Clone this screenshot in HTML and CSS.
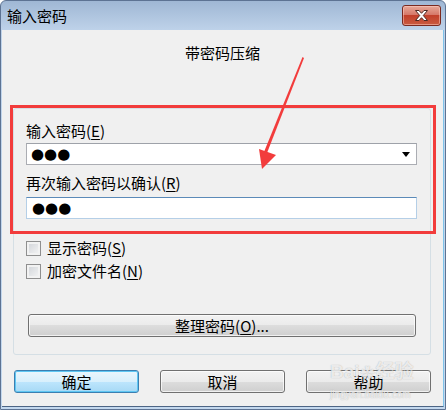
FILE: index.html
```html
<!DOCTYPE html>
<html lang="zh-CN">
<head>
    <meta charset="UTF-8">
    <title>输入密码</title>
    <link rel="stylesheet" href="styles.css">
</head>
<body>
    <div class="window">
        <div class="titlebar">
            <span class="title">输入密码</span>
            <div class="close-btn">
                <svg width="15" height="13" viewBox="0 0 15 13">
                    <path d="M1.5 1.5 H5 L7.5 4.3 L10 1.5 H13.5 L9.3 6.5 L13.5 11.5 H10 L7.5 8.7 L5 11.5 H1.5 L5.7 6.5 Z"
                          fill="#fff" stroke="#4d2a24" stroke-width="1" stroke-linejoin="round"/>
                </svg>
            </div>
        </div>
        <div class="client">
            <div class="heading">带密码压缩</div>
            <div class="group">
                <div class="label">输入密码(<u>E</u>)</div>
                <div class="combo">
                    <span class="dots">●●●</span>
                    <span class="arrow"></span>
                </div>
                <div class="label label-gap">再次输入密码以确认(<u>R</u>)</div>
                <div class="field">
                    <span class="dots">●●●</span>
                </div>
                <div class="check first">
                    <span class="box"></span>
                    <span>显示密码(<u>S</u>)</span>
                </div>
                <div class="check">
                    <span class="box"></span>
                    <span>加密文件名(<u>N</u>)</span>
                </div>
                <div class="btn wide">整理密码(<u>O</u>)...</div>
            </div>
            <div class="buttons">
                <div class="btn default">确定</div>
                <div class="btn">取消</div>
                <div class="btn">帮助</div>
            </div>
        </div>

        <!-- annotation overlay -->
        <div class="mark"></div>
        <svg class="pointer" width="446" height="410" viewBox="0 0 446 410">
            <path d="M302.5 57 L304 58 L267 153 L264 152 Z" fill="#f23c3c"/>
            <path d="M259 149 L276 155 L262 169 Z" fill="#f23c3c"/>
        </svg>
        <div class="watermark">
            <span class="wm-big">Bai<span class="paw">✿</span>经验</span>
            <span class="wm-small">jingyan.baidu.com</span>
        </div>
    </div>
</body>
</html>
```

FILE: styles.css
```css
* {
    box-sizing: border-box;
    margin: 0;
    padding: 0;
}

body {
    font-family: "Noto Sans CJK SC", "Liberation Sans", sans-serif;
    font-size: 15px;
    color: #000;
    background: #fff;
}

.window {
    position: relative;
    width: 446px;
    height: 410px;
    background: linear-gradient(#9fb7d4, #bfd3ea 30px, #c3d8ee);
    border: 1px solid #5d7393;
    border-radius: 6px 6px 0 0;
    display: flex;
    flex-direction: column;
    overflow: hidden;
}

.titlebar {
    height: 29px;
    display: flex;
    justify-content: space-between;
    align-items: flex-start;
    padding: 4px 4px 0 6px;
}

.title {
    line-height: 20px;
    margin-top: 1px;
}

.close-btn {
    width: 39px;
    height: 21px;
    border: 1px solid #7a2a20;
    border-radius: 3px;
    background: linear-gradient(#e8a898, #d6796a 45%, #c2402b 50%, #c95a3f);
    box-shadow: inset 0 0 0 1px rgba(255, 210, 200, 0.5);
    display: flex;
    align-items: center;
    justify-content: center;
}

.client {
    flex: 1;
    margin: 0 1px 2px 1px;
    background: #f0f0f0;
    border-bottom: 1px solid #4d6585;
    border-right: 1px solid #7fc3ea;
    padding: 14px 0 0 11px;
}

.heading {
    text-align: center;
    line-height: 18px;
    padding-right: 11px;
}

.group {
    width: 418px;
    height: 247px;
    margin-top: 46px;
    border: 1px solid #d5dfe5;
    border-radius: 3px;
    padding: 13px 13px 0 12px;
}

.label {
    line-height: 18px;
}

.label-gap {
    margin-top: 9px;
}

u {
    text-underline-offset: 2px;
}

.combo,
.field {
    height: 22px;
    margin-top: 3px;
    background: #fff;
    border: 1px solid #abadb3;
    border-top-color: #9ea2a9;
    display: flex;
    align-items: center;
    justify-content: space-between;
    padding: 0 6px 0 4px;
}

.field {
    margin-top: 5px;
    border-color: #b5cfe7;
    border-top-color: #5b8ab8;
    padding-left: 5px;
}

.dots {
    font-family: "DejaVu Sans", sans-serif;
    font-size: 15px;
    line-height: 20px;
}

.arrow {
    width: 0;
    height: 0;
    border-left: 4px solid transparent;
    border-right: 4px solid transparent;
    border-top: 5px solid #000;
}

.check {
    display: flex;
    align-items: center;
    gap: 6px;
    line-height: 18px;
    margin-top: 5px;
}

.check.first {
    margin-top: 20px;
}

.box {
    width: 15px;
    height: 15px;
    border: 1px solid #8f8f8f;
    background: linear-gradient(135deg, #cfd2d7, #f6f6f6);
    box-shadow: inset 0 0 0 2px #f2f2f2;
}

.btn {
    height: 23px;
    border: 1px solid #707070;
    border-radius: 3px;
    background: linear-gradient(#f2f2f2, #ebebeb 50%, #dddddd 50%, #cfcfcf);
    box-shadow: inset 0 0 0 1px rgba(255, 255, 255, 0.7);
    text-align: center;
    line-height: 21px;
}

.btn.wide {
    margin: 34px 1px 0 2px;
}

.buttons {
    display: flex;
    gap: 21px;
    margin-top: 15px;
    padding-left: 1px;
}

.buttons .btn {
    width: 125px;
}

.btn.default {
    border-color: #3c7fb1;
    background: linear-gradient(#eaf6fd, #d9f0fc 50%, #bee6fd 50%, #a7d9f5);
    box-shadow: inset 0 0 0 1px #5fc7f3;
}

.mark {
    position: absolute;
    left: 9px;
    top: 104px;
    width: 426px;
    height: 129px;
    border: 3px solid #f23c3c;
}

.pointer {
    position: absolute;
    left: -1px;
    top: -1px;
}

.watermark {
    position: absolute;
    left: 329px;
    top: 360px;
    display: flex;
    flex-direction: column;
    align-items: flex-start;
    color: rgba(255, 255, 255, 0.75);
    text-shadow: 0 0 1px rgba(120, 120, 120, 0.6);
    font-family: "Liberation Sans", "Noto Sans CJK SC", sans-serif;
}

.wm-big {
    font-size: 19px;
    font-weight: bold;
    line-height: 22px;
}

.paw {
    font-size: 14px;
    margin: 0 1px;
}

.wm-small {
    font-size: 10px;
    line-height: 14px;
    margin-top: 4px;
}
```
